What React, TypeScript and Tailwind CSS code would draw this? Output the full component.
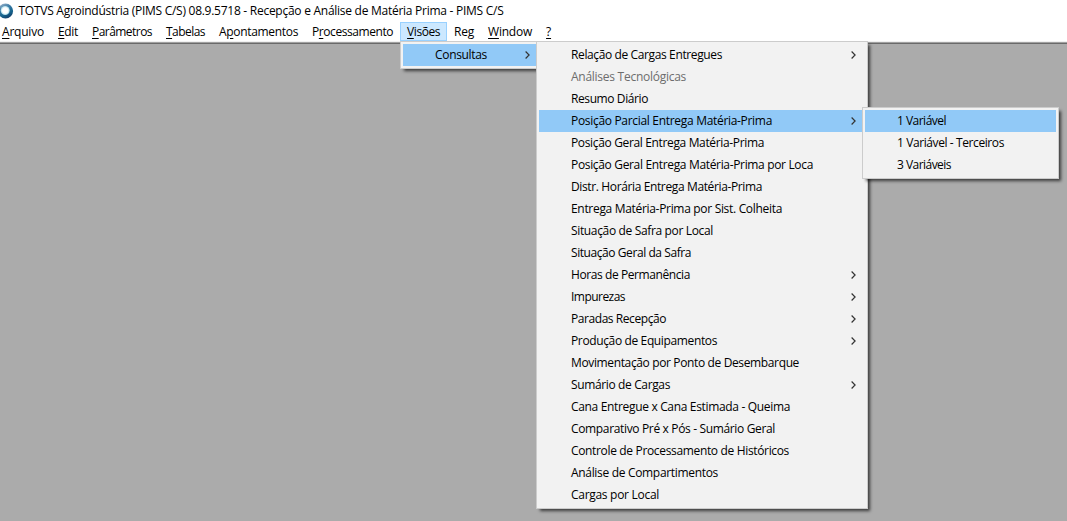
import { useLayoutEffect, useRef } from "react";
import type { ReactNode } from "react";

function Label({ w, children, className = "" }: { w: number; children: ReactNode; className?: string }) {
  const ref = useRef<HTMLSpanElement>(null);
  useLayoutEffect(() => {
    const el = ref.current;
    if (!el) return;
    el.style.letterSpacing = "0px";
    const natural = el.getBoundingClientRect().width;
    const count = (el.textContent ?? "").length;
    el.style.letterSpacing = `${(w - natural) / count}px`;
  }, [w]);
  return (
    <span ref={ref} className={`inline-block whitespace-pre ${className}`}>
      {children}
    </span>
  );
}

type BarItem = { pre?: string; key: string; post: string; w: number; open?: boolean };

const bar: BarItem[] = [
  { key: "A", post: "rquivo", w: 42 },
  { key: "E", post: "dit", w: 20 },
  { key: "P", post: "arâmetros", w: 60 },
  { key: "T", post: "abelas", w: 39 },
  { pre: "A", key: "p", post: "ontamentos", w: 79 },
  { pre: "P", key: "r", post: "ocessamento", w: 81 },
  { key: "V", post: "isões", w: 33, open: true },
  { pre: "Re", key: "g", post: "", w: 20 },
  { key: "W", post: "indow", w: 44 },
  { key: "?", post: "", w: 5 },
];

type Item = { label: string; w: number; sub?: boolean; active?: boolean; disabled?: boolean };

const queries: Item[] = [
  { label: "Relação de Cargas Entregues", w: 151, sub: true },
  { label: "Análises Tecnológicas", w: 115, disabled: true },
  { label: "Resumo Diário", w: 77 },
  { label: "Posição Parcial Entrega Matéria-Prima", w: 201, sub: true, active: true },
  { label: "Posição Geral Entrega Matéria-Prima", w: 193 },
  { label: "Posição Geral Entrega Matéria-Prima por Loca", w: 242 },
  { label: "Distr. Horária Entrega Matéria-Prima", w: 191 },
  { label: "Entrega Matéria-Prima por Sist. Colheita", w: 211 },
  { label: "Situação de Safra por Local", w: 142 },
  { label: "Situação Geral da Safra", w: 120 },
  { label: "Horas de Permanência", w: 119, sub: true },
  { label: "Impurezas", w: 54, sub: true },
  { label: "Paradas Recepção", w: 95, sub: true },
  { label: "Produção de Equipamentos", w: 146, sub: true },
  { label: "Movimentação por Ponto de Desembarque", w: 228 },
  { label: "Sumário de Cargas", w: 99, sub: true },
  { label: "Cana Entregue x Cana Estimada - Queima", w: 219 },
  { label: "Comparativo Pré x Pós - Sumário Geral", w: 204 },
  { label: "Controle de Processamento de Históricos", w: 218 },
  { label: "Análise de Compartimentos", w: 147 },
  { label: "Cargas por Local", w: 88 },
];

const variables: Item[] = [
  { label: "1 Variável", w: 49, active: true },
  { label: "1 Variável - Terceiros", w: 107 },
  { label: "3 Variáveis", w: 54 },
];

function Menu({ items, className }: { items: Item[]; className: string }) {
  return (
    <div
      className={`absolute border border-[#cccccc] bg-[#f2f2f2] p-[2px] shadow-[3px_3px_3px_-1px_rgba(0,0,0,0.65)] ${className}`}
    >
      {items.map((item) => (
        <div
          key={item.label}
          className={`flex h-[22px] items-center justify-between pr-[9px] pl-8 ${item.active ? "bg-[#91c9f7]" : ""} ${item.disabled ? "text-[#6d6d6d]" : "text-black"}`}
        >
          <Label w={item.w}>{item.label}</Label>
          {item.sub && (
            <svg className="-mt-px" width="5" height="8" viewBox="0 0 5 8" fill="none" stroke="#333" strokeWidth="1.2">
              <path d="M0.6 0.5 4.1 4 0.6 7.5" />
            </svg>
          )}
        </div>
      ))}
    </div>
  );
}

function Logo() {
  return (
    <svg className="mt-[-2px] -ml-[3px] shrink-0" width="17" height="17" viewBox="0 0 17 17">
      <defs>
        <linearGradient id="ring" x1="0.2" y1="0" x2="0.7" y2="1">
          <stop offset="0" stopColor="#9fb6cc" />
          <stop offset="0.35" stopColor="#3b7ba6" />
          <stop offset="0.7" stopColor="#15638c" />
          <stop offset="1" stopColor="#123a66" />
        </linearGradient>
        <radialGradient id="core">
          <stop offset="0.6" stopColor="#ffffff" />
          <stop offset="1" stopColor="#a4d8e6" />
        </radialGradient>
      </defs>
      <circle cx="8.5" cy="9" r="7.6" fill="url(#ring)" />
      <circle cx="8.2" cy="8.5" r="4.5" fill="url(#core)" />
    </svg>
  );
}

export default function App() {
  return (
    <div className="relative flex h-[521px] w-[1067px] flex-col overflow-hidden bg-white font-['Open_Sans','Noto_Sans',sans-serif] text-[12px] leading-[16px] text-black [font-stretch:94%]">
      <header className="flex h-[22px] shrink-0 items-center gap-[4.5px]">
        <Logo />
        <Label w={485}>TOTVS Agroindústria (PIMS C/S) 08.9.5718 - Recepção e Análise de Matéria Prima - PIMS C/S</Label>
      </header>
      <nav className="-ml-[5px] flex h-[19px] shrink-0">
        {bar.map((item) => (
          <div
            key={item.key + item.post}
            className={`flex items-center px-[7px] ${item.open ? "bg-[#cce8ff] outline -outline-offset-1 outline-[#99d1ff]" : ""}`}
          >
            <Label w={item.w}>
              {item.pre}
              <span className="underline underline-offset-2">{item.key}</span>
              {item.post}
            </Label>
          </div>
        ))}
      </nav>
      <main className="flex-1 border-t border-[#f0f0f0] bg-[#ababab]">
        <div className="h-px bg-[#a0a0a0]" />
        <div className="h-px bg-[#696969]" />
      </main>
      <Menu items={[{ label: "Consultas", w: 52, sub: true, active: true }]} className="top-[41px] left-[400px] w-[142px]" />
      <Menu items={queries} className="top-[41px] left-[536px] w-[332px]" />
      <Menu items={variables} className="top-[107px] left-[862px] w-[197px]" />
    </div>
  );
}
